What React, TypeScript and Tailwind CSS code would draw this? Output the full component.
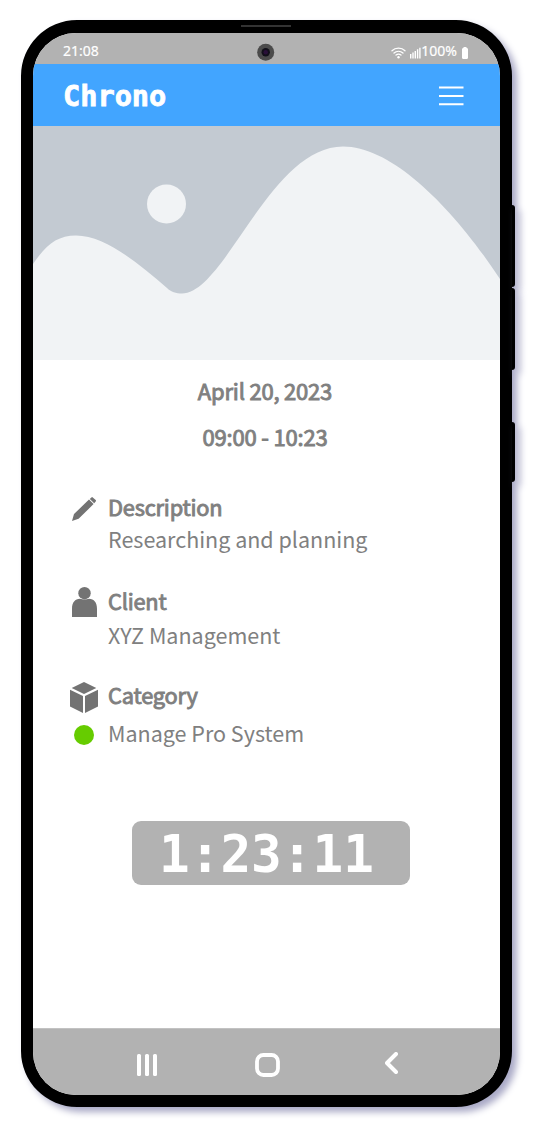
import React from "react";

const bodyFont = "font-['Noto_Sans_CJK_SC',sans-serif]";

function StatusBar() {
  return (
    <div className="relative flex h-[31px] shrink-0 items-center justify-between bg-[#b2b2b2] pl-[30px] pr-[32px] pt-[5px] font-['Noto_Sans',sans-serif] text-[14px] leading-[20px] text-white [-webkit-text-stroke:0.2px_white]">
      <span>21:08</span>
      <div className="flex items-center">
        <svg width="15" height="12" viewBox="0 0 15 12" className="mt-[3px]" fill="none" stroke="white" strokeWidth="1.3" strokeLinecap="round">
          <path d="M1 3.7C4.5.3 10.5.3 14 3.7M3 6C5.6 3.7 9.4 3.7 12 6M5 8.1c1.5-1.2 3.5-1.2 5 0" />
          <circle cx="7.5" cy="10.3" r="1.2" fill="white" stroke="none" />
        </svg>
        <svg width="11" height="12" viewBox="0 0 11 12" className="ml-1 mt-[3px]" fill="white">
          <path d="M0 7h1.400v4.500H0zM2.300 5.500h1.400v6H2.300zM4.600 4h1.400v7.500H4.600zM6.900 2.300h1.400v9.200H6.900zM9.200 .8h1.400v10.700H9.200z" />
        </svg>
        <span>100%</span>
        <svg width="6" height="12" viewBox="0 0 6 12" className="ml-[5px] mt-[3px]" fill="white">
          <path d="M1.5 0h3v1H5.2L6 2v9l-.8 1H.8L0 11V2l.8-1h.7z" />
        </svg>
      </div>
      <svg width="18" height="18" viewBox="0 0 18 18" className="absolute left-[224px] top-[10px]">
        <circle cx="8.7" cy="9.3" r="8.5" fill="#4b4b4b" />
        <circle cx="8.7" cy="9.3" r="4.2" fill="#12101a" />
        <circle cx="8.7" cy="9.3" r="2.2" fill="#291039" />
      </svg>
    </div>
  );
}

function Header() {
  return (
    <header className="flex h-[62px] shrink-0 items-center justify-between bg-[#42a5ff] pl-[30px] pr-[36px] pt-px">
      <h1 className="pt-px font-['DejaVu_Sans_Mono',monospace] text-[28.6px] font-bold leading-[34px] text-white [-webkit-text-stroke:0.8px_white]">
        Chrono
      </h1>
      <svg width="25" height="20" viewBox="0 0 25 20" stroke="white" strokeWidth="2">
        <path d="M0 1.5h24.5M0 10h24.5M0 18.3h24.5" />
      </svg>
    </header>
  );
}

function Placeholder() {
  return (
    <svg width="467" height="234" viewBox="0 0 467 234" className="block shrink-0 bg-[#c3cad2]" fill="#f1f3f5">
      <path d="M0 138C13 119 24 109.5 43 109.5C72 109.5 105 137 134 162C138 166 143 167.5 149 167.5C192 167.5 237 20.5 310 20.5C360 20.5 421 83 467 153V234H0z" />
      <circle cx="133.5" cy="78" r="19.5" />
    </svg>
  );
}

function PencilIcon() {
  return (
    <svg width="24" height="24" viewBox="0 0 24 24" fill="#737373">
      <path d="M0 24l2-7L17 2.600l4.600 4.500L6.600 21.700zM17.800 1.900L19.400.4q.7-.6 1.400 0L23.700 3q.6.700 0 1.400l-1.500 1.900z" />
    </svg>
  );
}

function PersonIcon() {
  return (
    <svg width="25" height="30" viewBox="0 0 25 30" fill="#737373">
      <circle cx="12.5" cy="6.2" r="6.2" />
      <path d="M0 30V22c0-7 3-9.800 8-10.200q4.500 1.400 9 0c5 .4 8 3.200 8 10.200v8z" />
    </svg>
  );
}

function CubeIcon() {
  return (
    <svg width="28" height="31" viewBox="0 0 28 31" fill="#737373">
      <path d="M14 0l12.300 5.900L14 12 1.700 5.900zM0 7.800l13 6.100V31L0 24.500zM28 7.800l-13 6.100V31l13-6.500z" />
    </svg>
  );
}

type FieldProps = {
  icon: React.ReactNode;
  label: string;
  value: string;
  className: string;
  labelClass: string;
  valueClass: string;
  dot?: boolean;
};

function Field({ icon, label, value, className, labelClass, valueClass, dot }: FieldProps) {
  return (
    <div className={`grid grid-cols-[28px_1fr] gap-x-[10px] ${className}`}>
      <div className="flex h-[32px] items-center justify-center">{icon}</div>
      <div className={`text-[21.8px] leading-[31px] tracking-[-0.2px] [-webkit-text-stroke:0.9px_#808080] ${labelClass}`}>{label}</div>
      <div className="flex items-center justify-center">{dot && <span className="mt-[2px] size-5 rounded-full bg-[#66cc00]" />}</div>
      <div className={`text-[21.5px] ${valueClass}`}>{value}</div>
    </div>
  );
}

function NavBar() {
  return (
    <nav className="flex h-[67px] shrink-0 items-center border-t border-[#c2c2c2] bg-[#b2b2b2] pl-[104px] pt-[6px]">
      <svg width="20" height="22" viewBox="0 0 20 22" fill="white">
        <rect width="4" height="22" rx="1.5" />
        <rect x="8" width="4" height="22" rx="1.5" />
        <rect x="16" width="4" height="22" rx="1.5" />
      </svg>
      <svg width="25" height="24" viewBox="0 0 25 24" className="ml-[98px]" fill="none" stroke="white" strokeWidth="3.8">
        <rect x="2" y="2" width="21" height="20" rx="6.5" />
      </svg>
      <svg width="13" height="22" viewBox="0 0 13 22" className="-mt-[4px] ml-[105px]" fill="none" stroke="white" strokeWidth="4" strokeLinecap="round" strokeLinejoin="round">
        <path d="M11 2L2 11l9 9" />
      </svg>
    </nav>
  );
}

export default function App() {
  return (
    <div className="h-[1140px] w-[548px] bg-white pl-[21px] pt-[20px]">
      <div className="relative h-[1087px] w-[491px] rounded-[56px] border-x-[12px] border-b-[12px] border-t-[13px] border-black bg-black shadow-[5px_5px_7px_#a9a9c6]">
        <div className="absolute -top-[8px] left-[208px] h-[2px] w-[50px] bg-[#333]" />
        <div className="absolute -right-[15px] top-[172px] h-[82px] w-[3px] rounded-r-[3px] bg-black shadow-[5px_5px_7px_#a9a9c6]" />
        <div className="absolute -right-[15px] top-[255px] h-[82px] w-[3px] rounded-r-[3px] bg-black shadow-[5px_5px_7px_#a9a9c6]" />
        <div className="absolute -right-[15px] top-[389px] h-[60px] w-[3px] rounded-r-[3px] bg-black shadow-[5px_5px_7px_#a9a9c6]" />
        <div className="flex h-[1062px] w-[467px] flex-col overflow-hidden rounded-[43px] bg-white">
          <StatusBar />
          <Header />
          <Placeholder />
          <main className={`flex flex-1 flex-col text-[#808080] ${bodyFont}`}>
            <div className="pr-[3px] pt-[7px] text-center text-[22px] leading-[46px] tracking-[-0.2px] [-webkit-text-stroke:0.9px_#808080]">
              <p>April 20, 2023</p>
              <p>09:00 - 10:23</p>
            </div>
            <div className="pl-[37px]">
              <Field icon={<PencilIcon />} label="Description" value="Researching and planning" className="mt-[34px]" labelClass="-mt-[2px]" valueClass="-mt-[2px] leading-[32px]" />
              <Field icon={<PersonIcon />} label="Client" value="XYZ Management" className="mt-[31px]" labelClass="-mt-px" valueClass="-mt-px leading-[36px]" />
              <Field icon={<CubeIcon />} label="Category" value="Manage Pro System" className="mt-[28px]" labelClass="-mt-[2px]" valueClass="-mt-px leading-[42px]" dot />
            </div>
            <div className="ml-[99px] mt-[67px] flex h-[64px] w-[278px] items-center rounded-[9px] bg-[#b2b2b2] pl-[27px] font-['DejaVu_Sans_Mono',monospace] text-[51px] font-bold leading-[64px] text-white">
              <span className="mt-[4px]">1:23:11</span>
            </div>
          </main>
          <NavBar />
        </div>
      </div>
    </div>
  );
}
